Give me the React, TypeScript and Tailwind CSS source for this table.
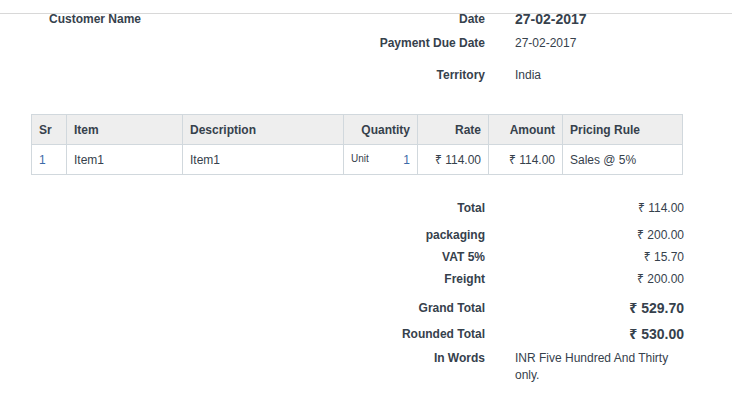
import React, { FC } from 'react';

// Invoice print view: header fields, item table and totals
const FONT = "font-['Liberation_Sans',Arial,'Noto_Sans',sans-serif]";

interface Item {
  sr: number;
  item: string;
  description: string;
  uom: string;
  qty: number;
  rate: string;
  amount: string;
  pricingRule: string;
}

const items: Item[] = [
  {
    sr: 1,
    item: 'Item1',
    description: 'Item1',
    uom: 'Unit',
    qty: 1,
    rate: '₹ 114.00',
    amount: '₹ 114.00',
    pricingRule: 'Sales @ 5%',
  },
];

const cell = 'h-[30px] flex items-center px-[7px] border-r border-b border-[#d1d8dd]';

const TotalRow: FC<{ label: string; value: string; className?: string; big?: boolean }> = ({
  label,
  value,
  className = '',
  big = false,
}) => (
  <div className={`flex leading-[17px] ${className}`}>
    <div className="w-[500px] pr-[15px] text-right font-bold">{label}</div>
    <div className={`w-[199px] px-[15px] text-right ${big ? 'text-[14px] font-bold' : ''}`}>{value}</div>
  </div>
);

const App: FC = () => {
  return (
    <div className={`${FONT} w-[732px] h-[395px] bg-white text-[12px] text-[#36414c] overflow-hidden`}>
      <div className="h-[14px] border-b border-[#d8d8d8]" />

      {/* header fields */}
      <div className="flex items-start">
        <div className="w-[366px] pl-[49px] leading-[10px] font-bold">Customer Name</div>
        <div className="w-[366px]">
          <div className="flex leading-[10px]">
            <div className="w-[134px] pr-[15px] text-right font-bold">Date</div>
            <div className="pl-[15px] text-[14px] font-bold">27-02-2017</div>
          </div>
          <div className="flex leading-[17px] mt-[11px]">
            <div className="w-[134px] pr-[15px] text-right font-bold">Payment Due Date</div>
            <div className="pl-[15px]">27-02-2017</div>
          </div>
          <div className="flex leading-[17px] mt-[15px]">
            <div className="w-[134px] pr-[15px] text-right font-bold">Territory</div>
            <div className="pl-[15px]">India</div>
          </div>
        </div>
      </div>

      {/* items table */}
      <div className="ml-[31px] mt-[30px] w-[652px] border-l border-t border-[#d1d8dd]">
        <div className="flex bg-[#eeeeee] font-bold">
          <div className={`${cell} w-[35px]`}>Sr</div>
          <div className={`${cell} w-[116px]`}>Item</div>
          <div className={`${cell} w-[161px]`}>Description</div>
          <div className={`${cell} w-[74px] justify-end`}>Quantity</div>
          <div className={`${cell} w-[71px] justify-end`}>Rate</div>
          <div className={`${cell} w-[74px] justify-end`}>Amount</div>
          <div className={`${cell} w-[120px]`}>Pricing Rule</div>
        </div>
        {items.map((row) => (
          <div key={row.sr} className="flex">
            <div className={`${cell} w-[35px] text-[#3c6aa8]`}>{row.sr}</div>
            <div className={`${cell} w-[116px]`}>{row.item}</div>
            <div className={`${cell} w-[161px]`}>{row.description}</div>
            <div className={`${cell} w-[74px] justify-between`}>
              <span className="text-[10px] -mt-[2px]">{row.uom}</span>
              <span className="text-[#3c6aa8]">{row.qty}</span>
            </div>
            <div className={`${cell} w-[71px] justify-end`}>{row.rate}</div>
            <div className={`${cell} w-[74px] justify-end`}>{row.amount}</div>
            <div className={`${cell} w-[120px]`}>{row.pricingRule}</div>
          </div>
        ))}
      </div>

      {/* totals */}
      <div className="mt-[25px]">
        <TotalRow label="Total" value="₹ 114.00" />
        <TotalRow label="packaging" value="₹ 200.00" className="mt-[10px]" />
        <TotalRow label="VAT 5%" value="₹ 15.70" className="mt-[5px]" />
        <TotalRow label="Freight" value="₹ 200.00" className="mt-[5px]" />
        <TotalRow label="Grand Total" value="₹ 529.70" className="mt-[12px]" big />
        <TotalRow label="Rounded Total" value="₹ 530.00" className="mt-[9px]" big />
        <div className="flex leading-[17px] mt-[7px]">
          <div className="w-[500px] pr-[15px] text-right font-bold">In Words</div>
          <div className="w-[199px] px-[15px]">INR Five Hundred And Thirty only.</div>
        </div>
      </div>
    </div>
  );
};

export default App;
